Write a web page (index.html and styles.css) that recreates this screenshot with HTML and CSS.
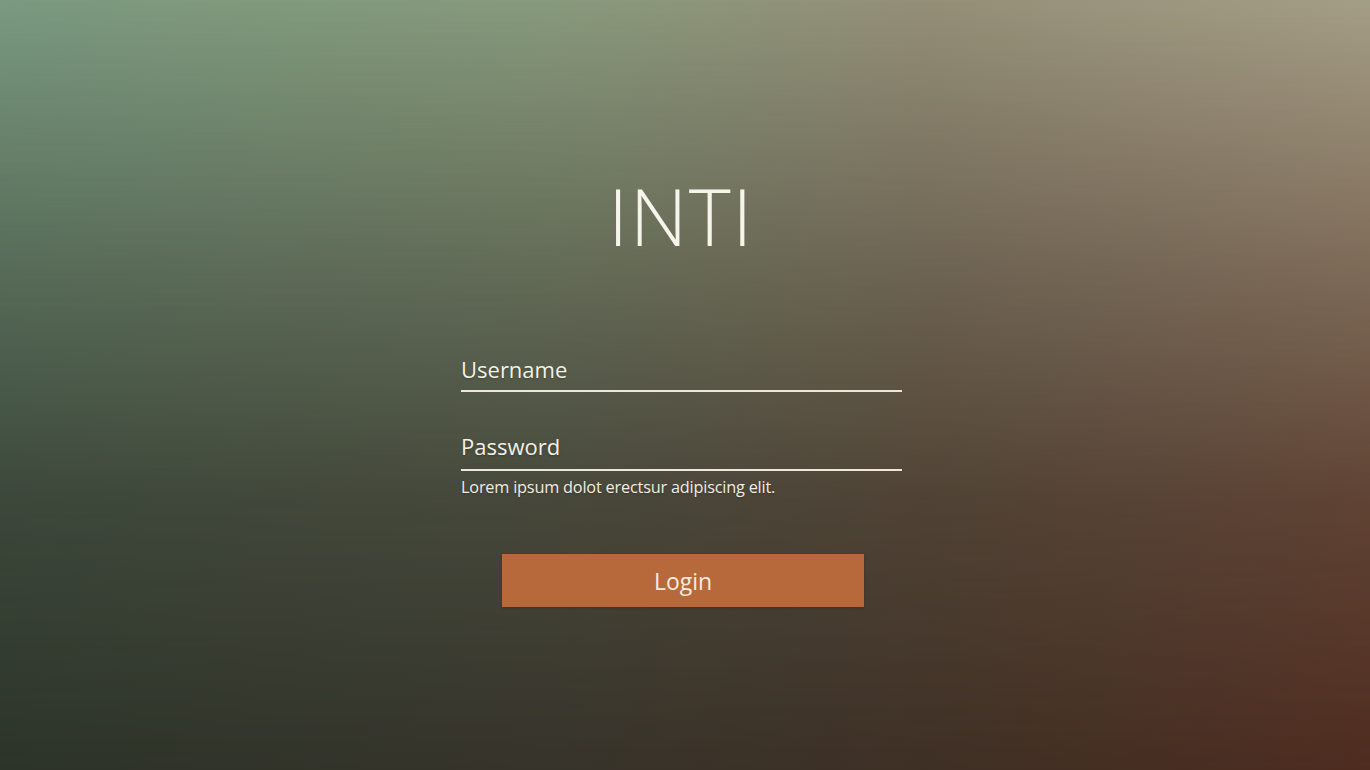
FILE: index.html
```html
<!DOCTYPE html>
<html lang="en">
<head>
<meta charset="utf-8">
<title>INTI – Login</title>
<link rel="stylesheet" href="styles.css">
</head>
<body>
<main class="page">
  <h1 class="brand">INTI</h1>
  <form class="login-form">
    <label class="field">
      <span class="field-label">Username</span>
    </label>
    <label class="field field-password">
      <span class="field-label">Password</span>
    </label>
    <p class="hint">Lorem ipsum dolot erectsur adipiscing elit.</p>
    <button type="button" class="login-btn">Login</button>
  </form>
</main>
</body>
</html>
```
FILE: styles.css
```css
html, body {
  margin: 0;
  padding: 0;
  height: 100%;
}

body {
  position: relative;
  width: 1370px;
  height: 770px;
  overflow: hidden;
  font-family: "Open Sans", "Noto Sans", sans-serif;
  color: #f2efe6;
  background: linear-gradient(to right, #7a9a80 0%, #889a7c 40%, #958f78 68%, #a59e87 100%);
}

body::before {
  content: "";
  position: absolute;
  inset: 0;
  background: linear-gradient(to right, #2c3328 0%, #36332a 40%, #3f2f24 70%, #4e2c1f 100%);
  -webkit-mask-image: linear-gradient(to bottom, transparent 0%, rgba(0,0,0,0.45) 35%, rgba(0,0,0,0.8) 65%, #000 100%);
  mask-image: linear-gradient(to bottom, transparent 0%, rgba(0,0,0,0.45) 35%, rgba(0,0,0,0.8) 65%, #000 100%);
}

.page {
  position: relative;
  display: flex;
  flex-direction: column;
  align-items: center;
  padding-top: 175px;
}

.brand {
  margin: 0 0 0 -8px;
  font-size: 80px;
  line-height: 80px;
  font-weight: 300;
  letter-spacing: 1.5px;
  color: #f7f4ec;
}

.login-form {
  width: 441px;
  margin-top: 98px;
  margin-left: -7px;
  display: flex;
  flex-direction: column;
}

.field {
  display: block;
  padding-bottom: 5px;
  border-bottom: 2px solid #ece7da;
}

.field-label {
  display: block;
  font-size: 22px;
  line-height: 32px;
  color: #f4f1e8;
  text-shadow: 0 1px 2px rgba(0,0,0,0.25);
}

.field-password {
  margin-top: 38px;
  padding-bottom: 7px;
}

.hint {
  margin: 5px 0 0;
  font-size: 16.3px;
  line-height: 22px;
  color: #f1ede4;
  letter-spacing: -0.2px;
  text-shadow: 0 1px 2px rgba(0,0,0,0.25);
}

.login-btn {
  align-self: flex-start;
  margin: 56px 0 0 41px;
  width: 362px;
  height: 53px;
  border: none;
  background: #b7693c;
  color: #f6ebdf;
  font-family: "Open Sans", "Noto Sans", sans-serif;
  font-size: 23px;
  box-shadow: 0 1px 3px rgba(0,0,0,0.2);
}
```
